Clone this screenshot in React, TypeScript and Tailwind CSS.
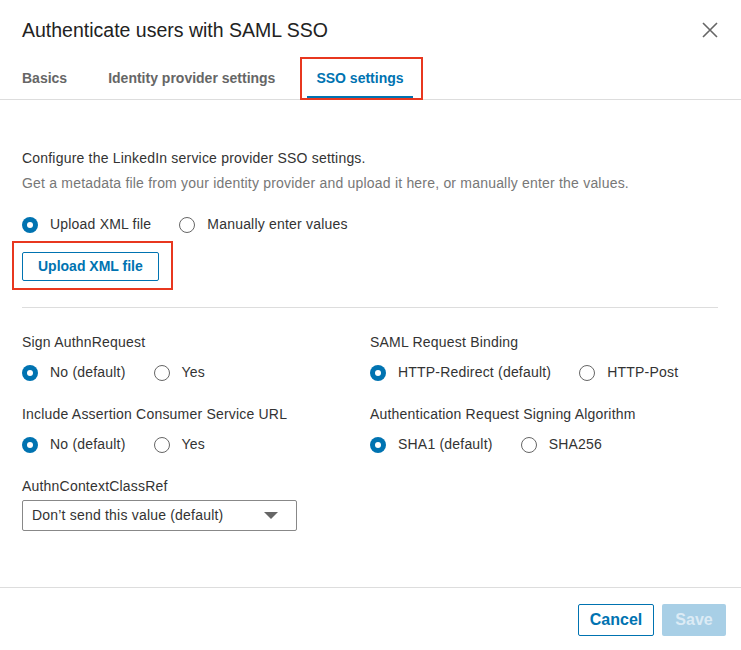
function Radio({ checked, label }: { checked?: boolean; label: string }) {
  return (
    <label className="flex items-center gap-[12px] text-[14px] tracking-[0.2px] text-[#333]">
      {checked ? (
        <span className="w-[16px] h-[16px] rounded-full bg-[#0073b1] flex items-center justify-center">
          <span className="w-[6px] h-[6px] rounded-full bg-white" />
        </span>
      ) : (
        <span className="w-[16px] h-[16px] rounded-full border border-[#666] bg-white" />
      )}
      <span>{label}</span>
    </label>
  );
}

function Field({ label, options }: { label: string; options: string[] }) {
  return (
    <div>
      <div className="text-[14px] leading-[20px] tracking-[0.2px] text-[#333]">{label}</div>
      <div className="mt-[10px] flex items-center gap-[28px]">
        {options.map((o, i) => (
          <Radio key={o} checked={i === 0} label={o} />
        ))}
      </div>
    </div>
  );
}

export default function App() {
  return (
    <div
      className="w-[741px] h-[650px] bg-white flex flex-col"
      style={{ fontFamily: '"Liberation Sans", Arial, sans-serif' }}
    >
      <header className="px-[22px] pt-[18px] flex items-center justify-between">
        <h1 className="text-[19.5px] leading-[24px] text-[#222]">Authenticate users with SAML SSO</h1>
        <svg width="16" height="16" viewBox="0 0 16 16" className="mr-[1px]">
          <path d="M1 1L15 15M15 1L1 15" stroke="#666" strokeWidth="1.6" />
        </svg>
      </header>

      <nav className="mt-[15px] h-[43px] border-b border-[#ddd] flex pl-[13px] gap-[23px]">
        {["Basics", "Identity provider settings"].map((t) => (
          <div key={t} className="px-[9px] h-[42px] flex items-center text-[14px] font-semibold text-[#666]">
            {t}
          </div>
        ))}
        <div className="relative px-[9px] h-[42px] flex items-center text-[14px] font-semibold text-[#0073b1] border-b-[3px] border-[#0073b1] pt-[3px]">
          SSO settings
          <span className="absolute -left-[7px] -right-[10px] top-0 -bottom-[4px] border-2 border-[#e8371f]" />
        </div>
      </nav>

      <main className="flex-1 px-[22px] pt-[48px]">
        <p className="text-[14px] leading-[20px] tracking-[0.2px] text-[#333]">
          Configure the LinkedIn service provider SSO settings.
        </p>
        <p className="mt-[5px] text-[14px] leading-[20px] tracking-[0.2px] text-[#777]">
          Get a metadata file from your identity provider and upload it here, or manually enter the values.
        </p>
        <div className="mt-[21px] flex items-center gap-[28px]">
          <Radio checked label="Upload XML file" />
          <Radio label="Manually enter values" />
        </div>
        <div className="relative mt-[17px] w-fit">
          <button className="h-[29px] px-[15px] border border-[#0073b1] rounded-[2px] text-[14px] font-bold text-[#0073b1]">
            Upload XML file
          </button>
          <span className="absolute -left-[10px] -right-[14px] -top-[11px] -bottom-[9px] border-2 border-[#e8371f]" />
        </div>
        <div className="mt-[26px] border-t border-[#ddd] w-[696px]" />

        <div className="mt-[24px] grid grid-cols-[348px_1fr]">
          <div className="flex flex-col gap-[21px]">
            <Field label="Sign AuthnRequest" options={["No (default)", "Yes"]} />
            <Field label="Include Assertion Consumer Service URL" options={["No (default)", "Yes"]} />
            <div>
              <div className="text-[14px] leading-[20px] tracking-[0.2px] text-[#333]">AuthnContextClassRef</div>
              <div className="mt-[4px] w-[275px] h-[31px] border border-[#888] rounded-[2px] flex items-center justify-between px-[9px] text-[14px] tracking-[0.2px] text-[#333]">
                <span>Don’t send this value (default)</span>
                <span className="w-0 h-0 border-l-[7px] border-r-[7px] border-t-[7px] border-l-transparent border-r-transparent border-t-[#666] mr-[9px]" />
              </div>
            </div>
          </div>
          <div className="flex flex-col gap-[21px]">
            <Field label="SAML Request Binding" options={["HTTP-Redirect (default)", "HTTP-Post"]} />
            <Field label="Authentication Request Signing Algorithm" options={["SHA1 (default)", "SHA256"]} />
          </div>
        </div>
      </main>

      <footer className="h-[63px] border-t border-[#ddd] flex items-start justify-end gap-[8px] pr-[15px] pt-[16px]">
        <button className="h-[32px] w-[76px] border border-[#0073b1] rounded-[2px] text-[16px] font-bold text-[#0073b1]">
          Cancel
        </button>
        <button className="h-[32px] w-[64px] bg-[#a8cfe6] rounded-[2px] text-[16px] font-bold text-[#dcebf5]">
          Save
        </button>
      </footer>
    </div>
  );
}
